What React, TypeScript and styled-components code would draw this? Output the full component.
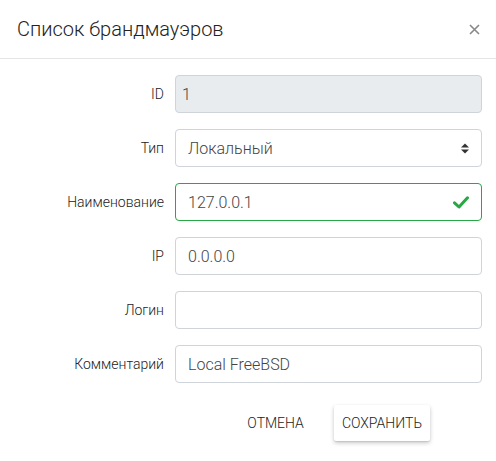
import React from 'react';
import styled, { createGlobalStyle } from 'styled-components';

const GlobalStyle = createGlobalStyle`
  html, body {
    margin: 0;
    padding: 0;
    background: #fff;
  }
  body {
    font-family: Roboto, "Liberation Sans", sans-serif;
    font-weight: 300;
    color: #333;
  }
`;

const Dialog = styled.div`
  width: 496px;
  background: #fff;
`;

const Header = styled.div`
  display: flex;
  align-items: center;
  justify-content: space-between;
  height: 58px;
  padding: 0 15px 0 17px;
  border-bottom: 1px solid #e5e5e5;
`;

const Title = styled.h4`
  margin: 0;
  font-size: 20px;
  font-weight: 300;
  color: #222;
`;

const Close = styled.button`
  border: 0;
  background: none;
  padding: 0;
  width: 14px;
  height: 14px;
  display: flex;
  align-items: center;
  justify-content: center;
  cursor: pointer;
`;

const Body = styled.div`
  display: flex;
  flex-direction: column;
  gap: 16px;
  padding: 16px 14px 0 15px;
`;

const Row = styled.div`
  display: grid;
  grid-template-columns: 149px 1fr;
  column-gap: 11px;
  align-items: center;
`;

const Label = styled.label`
  text-align: right;
  font-size: 14px;
  font-weight: 300;
  color: #222;
`;

const Field = styled.div<{ $state?: 'readonly' | 'valid' }>`
  box-sizing: border-box;
  height: 38px;
  display: flex;
  align-items: center;
  padding: 0 12px 0 ${p => (p.$state === 'readonly' ? '6px' : '12px')};
  border: 1px solid ${p => (p.$state === 'valid' ? '#28a745' : '#ced4da')};
  border-radius: 4px;
  background: ${p => (p.$state === 'readonly' ? '#e9ecef' : '#fff')};
  font-size: 16px;
  font-weight: 300;
  color: #444;
`;

const Value = styled.span`
  flex: 1;
`;

const Footer = styled.div`
  display: flex;
  justify-content: flex-end;
  align-items: center;
  gap: 22px;
  padding: 22px 66px 20px 0;
`;

const Button = styled.button<{ $raised?: boolean }>`
  height: 36px;
  padding: 0 8px;
  border: 0;
  border-radius: 2px;
  background: #fff;
  font-family: Roboto, "Liberation Sans", sans-serif;
  font-size: 14px;
  font-weight: 300;
  color: #222;
  text-transform: uppercase;
  box-shadow: ${p => (p.$raised ? '0 2px 4px rgba(0,0,0,0.22), 0 1px 1px rgba(0,0,0,0.08)' : 'none')};
  cursor: pointer;
`;

const SortIcon = () => (
  <svg width="8" height="11" viewBox="0 0 8 11">
    <path d="M0 4.5 L4 0.5 L8 4.5 Z M0 6.5 L4 10.5 L8 6.5 Z" fill="#333" />
  </svg>
);

const CheckIcon = () => (
  <svg width="16" height="13" viewBox="0 0 16 13">
    <path d="M1.5 6.8 L6 11 L14.5 1.8" fill="none" stroke="#28a745" strokeWidth="3" strokeLinecap="round" strokeLinejoin="round" />
  </svg>
);

const fields: { label: string; value: string; state?: 'readonly' | 'valid'; select?: boolean }[] = [
  { label: 'ID', value: '1', state: 'readonly' },
  { label: 'Тип', value: 'Локальный', select: true },
  { label: 'Наименование', value: '127.0.0.1', state: 'valid' },
  { label: 'IP', value: '0.0.0.0' },
  { label: 'Логин', value: '' },
  { label: 'Комментарий', value: 'Local FreeBSD' },
];

export default function App() {
  return (
    <>
      <GlobalStyle />
      <Dialog>
        <Header>
          <Title>Список брандмауэров</Title>
          <Close aria-label="close">
            <svg width="11" height="11" viewBox="0 0 11 11">
              <path d="M1 1 L10 10 M10 1 L1 10" stroke="#888" strokeWidth="1.6" />
            </svg>
          </Close>
        </Header>
        <Body>
          {fields.map(f => (
            <Row key={f.label}>
              <Label>{f.label}</Label>
              <Field $state={f.state}>
                <Value>{f.value}</Value>
                {f.select && <SortIcon />}
                {f.state === 'valid' && <CheckIcon />}
              </Field>
            </Row>
          ))}
        </Body>
        <Footer>
          <Button>Отмена</Button>
          <Button $raised>Сохранить</Button>
        </Footer>
      </Dialog>
    </>
  );
}
